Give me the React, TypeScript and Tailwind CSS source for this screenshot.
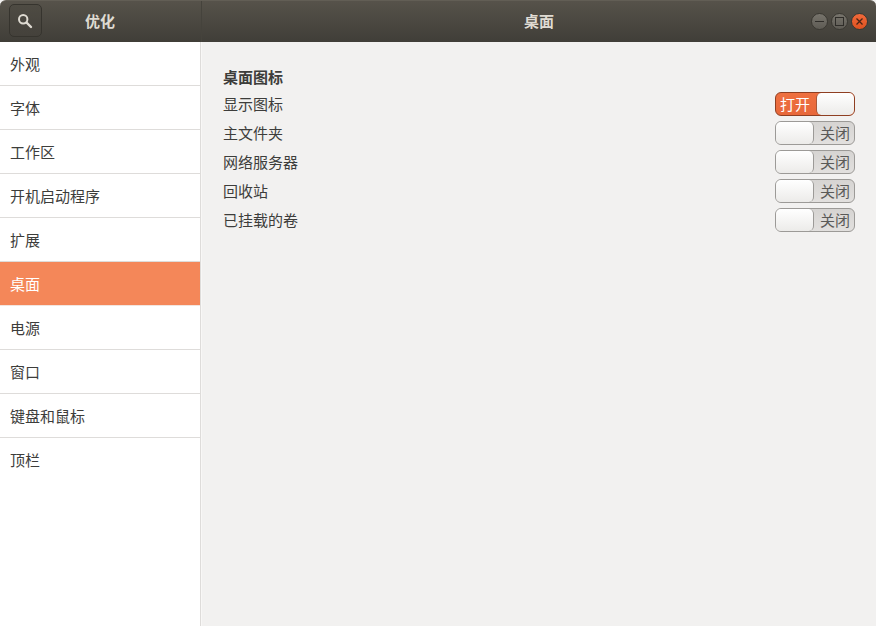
import React from 'react';

const sidebarItems = ['外观', '字体', '工作区', '开机启动程序', '扩展', '桌面', '电源', '窗口', '键盘和鼠标', '顶栏'];

const settings = [
  { label: '显示图标', on: true },
  { label: '主文件夹', on: false },
  { label: '网络服务器', on: false },
  { label: '回收站', on: false },
  { label: '已挂载的卷', on: false },
];

const Toggle = ({ on }: { on: boolean }) =>
  on ? (
    <div className="flex h-6 w-20 rounded-[6px] border border-[#8f3f22] bg-gradient-to-b from-[#ee7040] to-[#e8683a] text-[15px] text-white">
      <span className="w-[40px] pl-1 leading-[22px]">打开</span>
      <div className="h-[22px] flex-1 rounded-[5px] border-l border-[#a8583a] bg-gradient-to-b from-white to-[#ecebe9]" />
    </div>
  ) : (
    <div className="flex h-6 w-20 rounded-[6px] border border-[#9c9a97] bg-gradient-to-b from-[#d6d4d2] to-[#e2e0de] text-[15px] text-[#5a5a58]">
      <div className="h-[22px] w-[38px] rounded-[5px] border-r border-[#9c9a97] bg-gradient-to-b from-white to-[#ecebe9]" />
      <span className="flex-1 pl-[6px] leading-[22px]">关闭</span>
    </div>
  );

const App = () => {
  return (
    <div className="flex h-[626px] w-[876px] flex-col overflow-hidden bg-[#f2f1f0] font-['Noto_Sans_CJK_SC','Noto_Sans',sans-serif] text-[15px] text-[#3d3d3b]">
      {/* Header */}
      <header className="flex h-[42px] shrink-0 rounded-t-[6px] border-t border-[#625e55] bg-gradient-to-b from-[#56524a] to-[#403e38]">
        <div className="flex w-[202px] items-center border-r border-[#45433c] pl-[9px]">
          <button className="mb-[2px] flex h-[33px] w-[33px] items-center justify-center rounded-[5px] border border-[#36342e] bg-gradient-to-b from-[#4e4b43] to-[#44413b] pr-[1px]">
            <svg width="16" height="16" viewBox="0 0 16 16" fill="none" stroke="#dfdbd2" strokeWidth="2">
              <circle cx="6.2" cy="6.2" r="4.2" />
              <path d="M9.5 9.5 L14 14" strokeLinecap="round" strokeWidth="2.4" />
            </svg>
          </button>
          <span className="ml-[43px] text-[15px] font-bold text-[#dfdbd2]">优化</span>
        </div>
        <div className="flex flex-1 items-center pl-[322px] pr-[8px]">
          <span className="text-[15px] font-bold text-[#dfdbd2]">桌面</span>
          <div className="ml-auto flex items-center gap-[3px]">
            <div className="flex h-[17px] w-[17px] items-center justify-center rounded-full border border-[#3a3832] bg-gradient-to-b from-[#77746c] to-[#5e5b54]">
              <div className="h-px w-[9px] bg-[#2f2d29]" />
            </div>
            <div className="flex h-[17px] w-[17px] items-center justify-center rounded-full border border-[#3a3832] bg-gradient-to-b from-[#77746c] to-[#5e5b54]">
              <div className="h-[9px] w-[9px] border border-[#2f2d29]" />
            </div>
            <div className="flex h-[17px] w-[17px] items-center justify-center rounded-full border border-[#3a3832] bg-gradient-to-b from-[#f0693a] to-[#e0521f]">
              <svg width="9" height="9" viewBox="0 0 9 9" stroke="#4a2415" strokeWidth="1.3">
                <path d="M1.5 1.5 L7.5 7.5 M7.5 1.5 L1.5 7.5" />
              </svg>
            </div>
          </div>
        </div>
      </header>

      <div className="flex min-h-0 flex-1">
        {/* Sidebar */}
        <nav className="w-[201px] shrink-0 border-r border-[#dedcda] bg-white">
          {sidebarItems.map((item, i) => (
            <div
              key={item}
              className={`h-11 pl-[10px] leading-[44px] ${i < sidebarItems.length - 1 ? 'border-b' : ''} ${
                item === '桌面' ? 'border-[#f2e5df] bg-[#f48759] text-white' : 'border-[#dedcda]'
              }`}
            >
              {item}
            </div>
          ))}
        </nav>

        {/* Content */}
        <main className="flex-1 border-l border-[#f8f7f6] pl-[21px] pr-[21px] pt-[25px]">
          <h2 className="h-[25px] font-bold leading-[20px]">桌面图标</h2>
          <div className="flex flex-col gap-[5px]">
            {settings.map((row) => (
              <div key={row.label} className="flex h-6 items-center justify-between">
                <span>{row.label}</span>
                <Toggle on={row.on} />
              </div>
            ))}
          </div>
        </main>
      </div>
    </div>
  );
};

export default App;
